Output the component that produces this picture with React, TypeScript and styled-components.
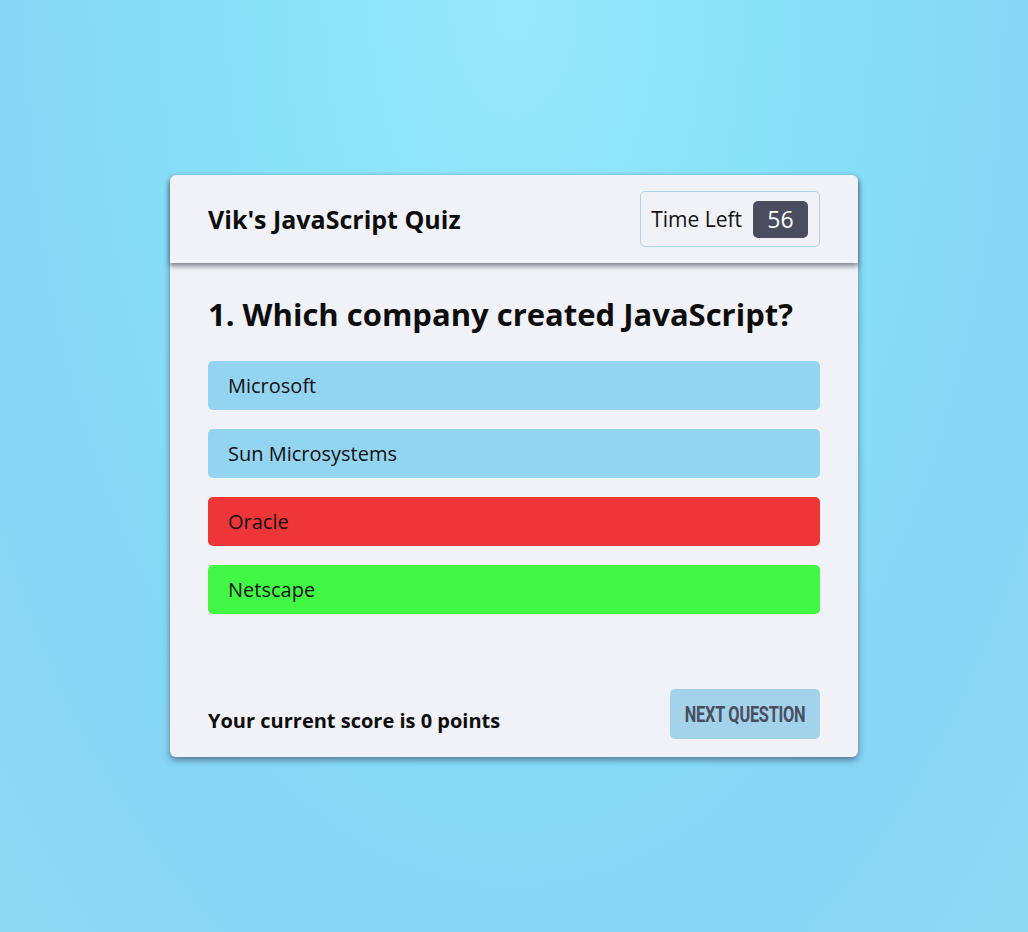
import React from 'react'
import styled, { createGlobalStyle } from 'styled-components'

const GlobalStyle = createGlobalStyle`
  html, body {
    margin: 0;
    padding: 0;
  }
  body {
    font-family: "Open Sans", "Noto Sans", sans-serif;
    background: radial-gradient(ellipse at 50% 0%, #97e8fb 0%, #88e2f8 35%, #86d5f5 75%, #90d9f4 100%);
    min-height: 100vh;
  }
`

const Page = styled.div`
  min-height: 100vh;
  display: flex;
  align-items: center;
  justify-content: center;
`

const Card = styled.div`
  width: 688px;
  background: #f1f2f7;
  border-radius: 6px;
  box-shadow: 0 3px 6px rgba(40, 44, 70, 0.55);
  display: flex;
  flex-direction: column;
`

const Header = styled.header`
  height: 88px;
  box-sizing: border-box;
  padding: 0 38px;
  display: flex;
  align-items: center;
  justify-content: space-between;
  border-radius: 6px 6px 0 0;
  box-shadow: 0 3px 5px rgba(50, 52, 70, 0.6);
  position: relative;
  z-index: 1;
`

const Title = styled.h1`
  margin: 0;
  font-size: 25px;
  font-weight: 700;
  color: #0d0d0d;
`

const Timer = styled.div`
  display: flex;
  align-items: center;
  gap: 11px;
  height: 56px;
  box-sizing: border-box;
  padding: 0 11px 0 10px;
  border: 1px solid #a9d6ea;
  border-radius: 5px;
  font-size: 21px;
  color: #111;
`

const TimerValue = styled.span`
  background: #4a4d60;
  color: #fff;
  border-radius: 5px;
  width: 55px;
  height: 37px;
  display: flex;
  align-items: center;
  justify-content: center;
  font-size: 23px;
`

const Body = styled.section`
  padding: 29px 38px 0;
  display: flex;
  flex-direction: column;
`

const Question = styled.h2`
  margin: 0 0 25px;
  font-size: 31px;
  font-weight: 700;
  line-height: 44px;
  color: #0d0d0d;
`

const Options = styled.div`
  display: flex;
  flex-direction: column;
  gap: 19px;
`

const optionColors: Record<string, string> = {
  idle: '#93d4f0',
  wrong: '#ee3638',
  right: '#41f845',
}

const Option = styled.button<{ $state: string }>`
  height: 49px;
  border: none;
  border-radius: 5px;
  padding: 0 20px;
  text-align: left;
  font-family: inherit;
  font-size: 20px;
  color: #111;
  background: ${(p) => optionColors[p.$state]};
  cursor: pointer;
`

const Footer = styled.footer`
  display: flex;
  align-items: flex-end;
  justify-content: space-between;
  padding: 75px 38px 18px;
`

const Score = styled.p`
  margin: 0 0 4px;
  font-size: 20px;
  line-height: 28px;
  font-weight: 700;
  color: #0d0d0d;
`

const NextButton = styled.button`
  width: 150px;
  height: 50px;
  padding: 0;
  border: none;
  border-radius: 5px;
  background: #a2d3ea;
  color: #4a4d60;
  font-family: "Liberation Sans Narrow", "Roboto", sans-serif;
  font-weight: 700;
  font-size: 19px;
  white-space: nowrap;
  display: flex;
  align-items: center;
  justify-content: center;
  cursor: pointer;
`

const ButtonLabel = styled.span`
  display: inline-block;
  transform: scale(0.86, 1.2);
  letter-spacing: -0.3px;
`

const answers = [
  { text: 'Microsoft', state: 'idle' },
  { text: 'Sun Microsystems', state: 'idle' },
  { text: 'Oracle', state: 'wrong' },
  { text: 'Netscape', state: 'right' },
]

export default function App() {
  return (
    <>
      <GlobalStyle />
      <Page>
        <Card>
          <Header>
            <Title>Vik's JavaScript Quiz</Title>
            <Timer>
              Time Left
              <TimerValue>56</TimerValue>
            </Timer>
          </Header>
          <Body>
            <Question>1. Which company created JavaScript?</Question>
            <Options>
              {answers.map((a) => (
                <Option key={a.text} $state={a.state}>
                  {a.text}
                </Option>
              ))}
            </Options>
          </Body>
          <Footer>
            <Score>Your current score is 0 points</Score>
            <NextButton>
              <ButtonLabel>NEXT QUESTION</ButtonLabel>
            </NextButton>
          </Footer>
        </Card>
      </Page>
    </>
  )
}
